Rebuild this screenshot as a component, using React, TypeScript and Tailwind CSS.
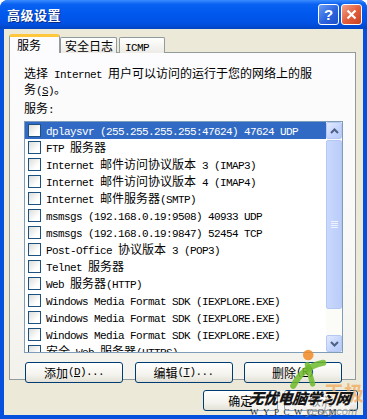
import type { ReactNode } from "react";

const CJK_SPLIT = /([\u2E80-\u9FFF\u3000-\u303F\uFF00-\uFFEF]+)/;
const CJK_TEST = /[\u2E80-\u9FFF\u3000-\u303F\uFF00-\uFFEF]/;

// SimSun-ish mix: CJK at 12px, latin as 6px-wide mono
function Txt({ s }: { s: string }) {
  return (
    <>
      {s.split(CJK_SPLIT).map((part, i) =>
        part === "" ? null : CJK_TEST.test(part) ? (
          <span key={i} className="font-['Noto_Sans_CJK_SC',sans-serif] text-[12px]">
            {part}
          </span>
        ) : (
          <span
            key={i}
            className="font-['Liberation_Mono',monospace] text-[11px] tracking-[-0.6px] whitespace-pre"
          >
            {part}
          </span>
        )
      )}
    </>
  );
}

const services = [
  "dplaysvr (255.255.255.255:47624) 47624 UDP",
  "FTP 服务器",
  "Internet 邮件访问协议版本 3 (IMAP3)",
  "Internet 邮件访问协议版本 4 (IMAP4)",
  "Internet 邮件服务器(SMTP)",
  "msmsgs (192.168.0.19:9508) 40933 UDP",
  "msmsgs (192.168.0.19:9847) 52454 TCP",
  "Post-Office 协议版本 3 (POP3)",
  "Telnet 服务器",
  "Web 服务器(HTTP)",
  "Windows Media Format SDK (IEXPLORE.EXE)",
  "Windows Media Format SDK (IEXPLORE.EXE)",
  "Windows Media Format SDK (IEXPLORE.EXE)",
  "安全 Web 服务器(HTTPS)",
];

function XpButton({ children, w }: { children: ReactNode; w: string }) {
  return (
    <div
      className={`${w} h-[21px] rounded-[3px] border border-[#003C74] bg-[linear-gradient(180deg,#FFFFFF_0%,#F4F3EE_60%,#E3E1D6_100%)] flex items-center justify-center text-black leading-[15px] whitespace-nowrap`}
    >
      {children}
    </div>
  );
}

function Arrow({ up }: { up?: boolean }) {
  return (
    <div className="h-[17px] w-[16px] rounded-[2px] border border-[#B5C8F4] bg-[linear-gradient(135deg,#E1EAFE_0%,#C3D3FD_60%,#B6CAF8_100%)] flex items-center justify-center">
      <svg width="9" height="6" viewBox="0 0 9 6">
        <path
          d={up ? "M1 5 L4.5 1.5 L8 5" : "M1 1 L4.5 4.5 L8 1"}
          fill="none"
          stroke="#4D6185"
          strokeWidth="2"
        />
      </svg>
    </div>
  );
}

export default function App() {
  return (
    <div className="w-[367px] h-[419px] bg-white">
      <div className="w-full h-full flex flex-col rounded-t-[8px] overflow-hidden bg-[#0550DC]">
        {/* title bar */}
        <div className="h-[29px] flex items-center pl-[7px] pr-[5px] bg-[linear-gradient(180deg,#3C8DFF_0%,#0A62F2_14%,#0058EE_45%,#0052E4_80%,#0044C4_100%)]">
          <span className="flex-1 text-white font-bold text-[13px] tracking-[0.5px] font-['Noto_Sans_CJK_SC',sans-serif] [text-shadow:1px_1px_0_#0B2A86]">
            高级设置
          </span>
          <div className="flex gap-[2px]">
            <div className="w-[21px] h-[21px] rounded-[3px] border border-white bg-[linear-gradient(135deg,#6A9CF5_0%,#2C63DE_55%,#1E4FC8_100%)] flex items-center justify-center text-white font-bold text-[15px] font-['Liberation_Sans',sans-serif] leading-none">
              ?
            </div>
            <div className="w-[21px] h-[21px] rounded-[3px] border border-white bg-[linear-gradient(135deg,#F2A58E_0%,#E2603F_50%,#C9401F_100%)] flex items-center justify-center">
              <svg width="11" height="11" viewBox="0 0 11 11">
                <path d="M1.5 1.5 L9.5 9.5 M9.5 1.5 L1.5 9.5" stroke="white" strokeWidth="2.2" />
              </svg>
            </div>
          </div>
        </div>

        {/* body */}
        <div className="relative flex-1 mx-[4px] mb-[4px] bg-[#ECE9D8] px-[5px] pt-[5px]">
          {/* tabs */}
          <div className="relative z-10 flex items-end h-[19px] -mb-px">
            <div className="h-[19px] w-[51px] rounded-t-[3px] border-x border-[#919B9C] border-t-[3px] border-t-[#FFC83C] bg-[#FCFCFE] pl-[7px] pt-[1px] leading-[13px]">
              <Txt s="服务" />
            </div>
            <div className="h-[16px] w-[57px] rounded-t-[2px] border border-b-0 border-[#919B9C] bg-[linear-gradient(180deg,#FFFFFF,#ECEBE6)] pl-[4px] pt-[1px] leading-[13px]">
              <Txt s="安全日志" />
            </div>
            <div className="ml-[2px] h-[16px] w-[46px] rounded-t-[2px] border border-b-0 border-[#919B9C] bg-[linear-gradient(180deg,#FFFFFF,#ECEBE6)] pl-[5px] pt-[1px] leading-[13px]">
              <Txt s="ICMP" />
            </div>
          </div>

          {/* panel */}
          <div className="w-[347px] h-[328px] border border-[#919B9C] bg-[linear-gradient(180deg,#FCFCFE_0%,#F8F8F6_70%,#F2F1EB_100%)] pl-[14px] pt-[13px] text-black">
            <div className="leading-[13px] whitespace-nowrap">
              <div>
                <Txt s="选择 Internet 用户可以访问的运行于您的网络上的服" />
              </div>
              <div>
                <Txt s="务(" />
                <span className="underline underline-offset-1 font-['Liberation_Mono',monospace] text-[11px] tracking-[-0.6px]">
                  S
                </span>
                <Txt s=")。" />
              </div>
            </div>
            <div className="mt-[3px] leading-[13px]">
              <Txt s="服务:" />
            </div>

            {/* list */}
            <div className="mt-[4px] w-[319px] h-[232px] border border-[#7F9DB9] bg-white flex overflow-hidden">
              <div className="flex-1 min-w-0">
                {services.map((s, i) => {
                  const sel = i === 0;
                  return (
                    <div
                      key={i}
                      className={`h-[17px] flex items-center pl-[3px] gap-[5px] leading-[13px] whitespace-nowrap ${
                        sel ? "bg-[#316AC5] text-white" : "text-black"
                      }`}
                    >
                      <div className="w-[13px] h-[13px] shrink-0 border border-[#1C5180] bg-[linear-gradient(135deg,#DCDCD7_0%,#FFFFFF_70%)]" />
                      <span>
                        <Txt s={s} />
                      </span>
                    </div>
                  );
                })}
              </div>
              {/* scrollbar */}
              <div className="w-[16px] flex flex-col bg-[#FBFBF8]">
                <Arrow up />
                <div className="flex-1 pt-[1px] pb-[26px]">
                  <div className="h-[169px] rounded-[2px] border border-[#B5C8F4] bg-[linear-gradient(90deg,#C9D8FD_0%,#BACDF9_100%)] flex items-center justify-center">
                    <div className="flex flex-col gap-[1px]">
                      <div className="w-[7px] h-px bg-[#EEF3FE]" />
                      <div className="w-[7px] h-px bg-[#EEF3FE]" />
                      <div className="w-[7px] h-px bg-[#EEF3FE]" />
                      <div className="w-[7px] h-px bg-[#EEF3FE]" />
                    </div>
                  </div>
                </div>
                <Arrow />
              </div>
            </div>

            {/* buttons */}
            <div className="mt-[9px] w-[319px] px-px flex justify-between">
              <XpButton w="w-[98px]">
                <Txt s="添加(" />
                <span className="underline font-['Liberation_Mono',monospace] text-[11px] tracking-[-0.6px]">D</span>
                <Txt s=")..." />
              </XpButton>
              <XpButton w="w-[98px]">
                <Txt s="编辑(" />
                <span className="underline font-['Liberation_Mono',monospace] text-[11px] tracking-[-0.6px]">T</span>
                <Txt s=")..." />
              </XpButton>
              <XpButton w="w-[98px]">
                <Txt s="删除(" />
                <span className="underline font-['Liberation_Mono',monospace] text-[11px] tracking-[-0.6px]">R</span>
                <Txt s=")" />
              </XpButton>
            </div>
          </div>

          {/* OK / Cancel */}
          <div className="mt-[10px] pl-[194px] flex gap-[6px]">
            <XpButton w="w-[75px]">
              <Txt s="确定" />
            </XpButton>
            <XpButton w="w-[75px]">
              <Txt s="取消" />
            </XpButton>
          </div>

          {/* watermark overlay */}
          <div className="absolute left-[236px] top-[312px] w-[124px] h-[86px] pointer-events-none">
            <svg className="absolute left-[48px] top-[6px]" width="44" height="44" viewBox="0 0 50 50">
              <circle cx="23" cy="9" r="6" fill="#F08A24" opacity="0.85" />
              <path d="M6 44 C14 30 22 22 40 18" stroke="#6DBA2C" strokeWidth="7" fill="none" strokeLinecap="round" opacity="0.85" />
              <path d="M22 20 L28 42" stroke="#6DBA2C" strokeWidth="6" strokeLinecap="round" opacity="0.85" />
            </svg>
            <div className="absolute left-[84px] top-[42px] text-[20px] leading-none font-bold text-[#F3A24A]/70 font-['Noto_Sans_CJK_SC',sans-serif]">
              天极
            </div>
            <div className="absolute left-[12px] top-[50px] w-[98px] h-[24px] bg-white/55" />
            <div className="absolute left-[9px] top-[49px] text-[15px] leading-none font-black italic -skew-x-6 text-[#151515] font-['Noto_Sans_CJK_SC',serif] tracking-[-0.5px]">
              无忧电脑学习网
            </div>
            <div className="absolute left-[10px] top-[67px] text-[9px] leading-none font-['Liberation_Serif',serif] text-[#222]">
              W_Y_P_C_W_C_O_M
            </div>
            <div className="absolute left-[66px] top-[65px] text-[11px] leading-none italic font-['Liberation_Sans',sans-serif] text-[#8A8A8A]/80">
              yesky.com
            </div>
          </div>
        </div>
      </div>
    </div>
  );
}
